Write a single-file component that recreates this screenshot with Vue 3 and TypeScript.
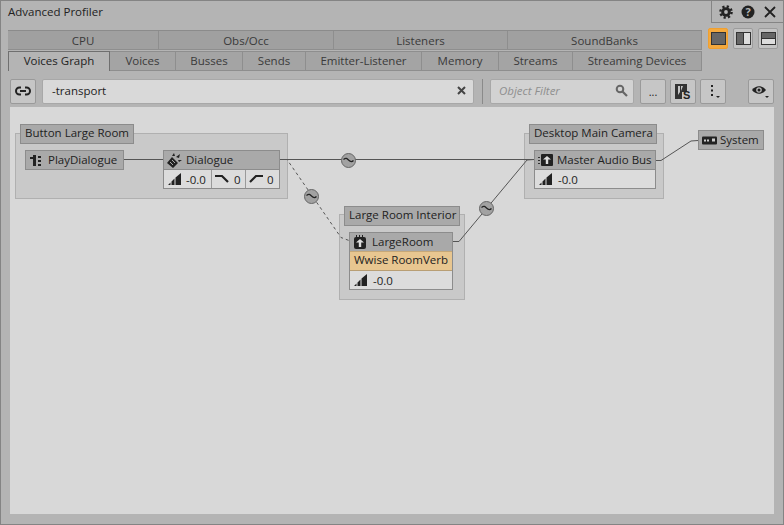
<script setup lang="ts">
const row1 = ['CPU', 'Obs/Occ', 'Listeners', 'SoundBanks']
const row2 = ['Voices Graph', 'Voices', 'Busses', 'Sends', 'Emitter-Listener', 'Memory', 'Streams', 'Streaming Devices']
const bubbles = [
  { x: 331, y: 46 },
  { x: 294, y: 82 },
  { x: 469, y: 94 }
]
</script>

<template>
  <div class="win">
    <header class="title">
      <span class="title-text">Advanced Profiler</span>
      <div class="win-actions">
        <svg width="14" height="14" viewBox="0 0 14 14"><circle cx="7" cy="7" r="4.800" fill="#222"/><circle cx="7" cy="7" r="5.600" fill="none" stroke="#222" stroke-width="2.400" stroke-dasharray="2.200 2.200"/><circle cx="7" cy="7" r="1.900" fill="#b4b4b4"/></svg>
        <svg width="14" height="14" viewBox="0 0 14 14"><circle class="ink" cx="7" cy="7" r="6.500"/><text x="7" y="11" text-anchor="middle" class="q">?</text></svg>
        <svg width="14" height="14" viewBox="0 0 14 14"><path d="M2 2l10 10M12 2L2 12" stroke="#222" stroke-width="1.800" fill="none"/></svg>
      </div>
    </header>

    <div class="tabs-area">
      <div class="tabs">
        <div class="row r1">
          <div v-for="t in row1" :key="t" class="tab">{{ t }}</div>
        </div>
        <div class="row r2">
          <div v-for="(t, i) in row2" :key="t" class="tab" :class="{ active: i === 0 }">{{ t }}</div>
        </div>
      </div>
      <div class="layouts">
        <button class="lay on"><span class="pane full"></span></button>
        <button class="lay"><span class="pane vert"><i></i><b></b></span></button>
        <button class="lay"><span class="pane horiz"><i></i><b></b></span></button>
      </div>
    </div>

    <div class="toolbar">
      <button class="tool">
        <svg width="16" height="10" viewBox="0 0 16 10"><path d="M6 1.500H4.500a3.500 3.500 0 0 0 0 7H6M10 1.500h1.500a3.500 3.500 0 0 1 0 7H10M5 5h6" fill="none" stroke="#222" stroke-width="2"/></svg>
      </button>
      <div class="search">
        <span>-transport</span>
        <svg width="9" height="9" viewBox="0 0 9 9"><path d="M1 1l7 7M8 1L1 8" stroke="#444" stroke-width="2" fill="none"/></svg>
      </div>
      <div class="sep"></div>
      <div class="filter">
        <span>Object Filter</span>
        <svg width="13" height="13" viewBox="0 0 13 13"><circle cx="5" cy="5" r="3.300" fill="none" stroke="#666" stroke-width="2"/><path d="M7.500 7.500L12 12" stroke="#666" stroke-width="2.200"/></svg>
      </div>
      <button class="tool dots">...</button>
      <button class="tool">
        <svg width="18" height="17" viewBox="0 0 18 17"><path d="M1 1h12v8H8v7H1z" fill="#333"/><path d="M4 3v9l2-3V3zM7 3v5l2-5z" fill="#c6c6c6"/><text x="9" y="16" class="vs">S</text></svg>
      </button>
      <button class="tool">
        <svg width="14" height="16" viewBox="0 0 14 16"><path d="M5 2h2v2H5zM5 6.500h2v2H5zM5 11h2v2H5z" fill="#222"/><path d="M10 13h4l-2 2z" fill="#222"/></svg>
      </button>
      <button class="tool eye">
        <svg width="18" height="14" viewBox="0 0 18 14"><path d="M0 6c4-5 10-5 14 0-4 5-10 5-14 0z" fill="#222"/><circle cx="7" cy="6" r="2.800" fill="#bbb"/><circle cx="7" cy="6" r="1.500" fill="#222"/><path d="M13 12h4l-2 2z" fill="#222"/></svg>
      </button>
    </div>

    <main class="canvas">
      <div class="group g1"></div>
      <div class="group g2"></div>
      <div class="group g3"></div>
      <div class="ghead gh1">Button Large Room</div>
      <div class="ghead gh2">Large Room Interior</div>
      <div class="ghead gh3">Desktop Main Camera</div>

      <svg class="wires" width="764" height="407" viewBox="10 107 764 407">
        <path d="M123 159.500H163" class="w"/>
        <path d="M279 159.500H534" class="w"/>
        <path d="M279 159.500h8L341 237.500l8 3" class="w dash"/>
        <path d="M452 241.500h7L527 160l7-.5" class="w"/>
        <path d="M655 160.500h6L691 141l7-.5" class="w"/>
      </svg>
      <div v-for="b in bubbles" :key="b.x" class="bubble" :style="{ left: b.x + 'px', top: b.y + 'px' }">
        <svg width="11" height="7" viewBox="0 0 11 7"><path d="M.5 2.500c2.500-2 3.500-1 5 .5s3 2.500 5 .5" stroke="#222" stroke-width="1.200" fill="none"/></svg>
      </div>

      <section class="node n-play">
        <div class="nhead">
          <svg width="13" height="13" viewBox="0 0 13 13"><path d="M1 3h3V1h3v11H4V5H1zM9 2h3v2H9zM9 6h3v2H9zM9 10h3v2H9z" fill="#222"/></svg>
          <span>PlayDialogue</span>
        </div>
      </section>

      <section class="node n-dial">
        <div class="nhead">
          <svg width="15" height="15" viewBox="0 0 15 15"><path d="M0 10l5-6 6 6-5 5zM5 3l2-3 1 3zM9 4l4-3-1 4zM11 7h4l-3 2z" fill="#222"/><path d="M3 9l3 3M5 7l3 3" stroke="#aaa"/></svg>
          <span>Dialogue</span>
        </div>
        <div class="cells c3">
          <div class="cell"><svg class="bar" width="13" height="12" viewBox="0 0 13 12"><path d="M0 12l2.500-2.500V12zM3.500 12V8.500L6.500 5.500V12zM7.500 12V4.500L13 0v12z" fill="#222"/></svg><span>-0.0</span></div>
          <div class="cell"><svg width="15" height="10" viewBox="0 0 15 10"><path d="M0 2h7l6 6" fill="none" stroke="#222" stroke-width="2.200"/></svg><span class="num">0</span></div>
          <div class="cell"><svg width="15" height="10" viewBox="0 0 15 10"><path d="M1 8l6-6h7" fill="none" stroke="#222" stroke-width="2.200"/></svg><span class="num">0</span></div>
        </div>
      </section>

      <section class="node n-room">
        <div class="nhead">
          <svg width="14" height="15" viewBox="0 0 14 15"><rect x="1" y="2" width="12" height="12" rx="2" fill="#222"/><path d="M3 0h1v2H3zM6 0h1v2H6zM9 0h1v2H9z" fill="#222"/><path d="M7 4l4 3.500H8.200V12H5.800V7.500H3z" fill="#ddd"/></svg>
          <span>LargeRoom</span>
        </div>
        <div class="fx">Wwise RoomVerb</div>
        <div class="cells"><div class="cell"><svg class="bar" width="13" height="12" viewBox="0 0 13 12"><path d="M0 12l2.500-2.500V12zM3.500 12V8.500L6.500 5.500V12zM7.500 12V4.500L13 0v12z" fill="#222"/></svg><span>-0.0</span></div></div>
      </section>

      <section class="node n-master">
        <div class="nhead">
          <svg width="15" height="14" viewBox="0 0 15 14"><rect x="3" y="1" width="12" height="12" rx="1" fill="#222"/><path d="M0 4h2v1H0zM0 7h2v1H0zM0 10h2v1H0z" fill="#333"/><path d="M9 3l4 3.500h-2.800V11H7.800V6.500H5z" fill="#ddd"/></svg>
          <span>Master Audio Bus</span>
        </div>
        <div class="cells"><div class="cell"><svg class="bar" width="13" height="12" viewBox="0 0 13 12"><path d="M0 12l2.500-2.500V12zM3.500 12V8.500L6.500 5.500V12zM7.500 12V4.500L13 0v12z" fill="#222"/></svg><span>-0.0</span></div></div>
      </section>

      <section class="node n-sys">
        <div class="nhead">
          <svg width="15" height="9" viewBox="0 0 15 9"><rect width="15" height="8" y=".5" rx="1" fill="#222"/><path d="M2 3.500h2v2H2zM5 3.500h2v2H5zM10 2.500h3v3h-3z" fill="#ccc"/></svg>
          <span>System</span>
        </div>
      </section>
    </main>
  </div>
</template>

<style>
html, body { margin: 0; background: #b4b4b4; }
</style>

<style scoped>
.win {
  position: relative;
  box-sizing: border-box;
  width: 784px;
  height: 525px;
  display: flex;
  flex-direction: column;
  background: #b4b4b4;
  border: 1px solid #848484;
  font-family: "Open Sans", "Noto Sans", sans-serif;
  font-size: 11.5px;
  color: #222;
  overflow: hidden;
}
.title {
  height: 29px;
  flex: none;
  display: flex;
  justify-content: space-between;
  align-items: flex-start;
}
.title-text { padding: 3px 0 0 7px; color: #222; }
.win-actions {
  width: 73px;
  height: 23px;
  margin-top: -1px;
  margin-right: -1px;
  padding-right: 7px;
  box-sizing: border-box;
  border-left: 1px solid #848484;
  border-bottom: 1px solid #848484;
  border-top: 1px solid #b4b4b4;
  display: flex;
  align-items: center;
  justify-content: flex-end;
  gap: 8px;
  background: #b4b4b4;
}
.ink { fill: #222; }
.q { font: bold 11px "Open Sans", sans-serif; fill: #b4b4b4; }
.vs { font: bold 11px "Liberation Sans", sans-serif; fill: #222; }
.tabs-area { display: flex; flex: none; }
.tabs { margin-left: 7px; width: 694px; }
.row { display: flex; height: 20px; box-sizing: border-box; }
.r1 { border-top: 1px solid #8b8b8b; }
.r1 .tab { height: 19px; background: #a0a0a0; color: #3a3a3a; }
.r1 .tab:nth-child(1) { width: 151px; }
.r1 .tab:nth-child(2) { width: 175px; }
.r1 .tab:nth-child(3) { width: 174px; }
.r1 .tab:nth-child(4) { width: 194px; }
.r2 { margin-top: 1px; height: 20px; }
.r2 .tab { padding-bottom: 2px; }
.tab {
  box-sizing: border-box;
  height: 20px;
  display: flex;
  align-items: center;
  justify-content: center;
  background: #a4a4a4;
  color: #3a3a3a;
  border-right: 1px solid #8e8e8e;
  border-bottom: 1px solid #8e8e8e;
  border-top: 1px solid #8e8e8e;
  white-space: nowrap;
}
.r1 .tab { border-top: 0; }
.r2 .tab:nth-child(1) { width: 102px; }
.r2 .tab:nth-child(2) { width: 66px; }
.r2 .tab:nth-child(3) { width: 67px; }
.r2 .tab:nth-child(4) { width: 63px; }
.r2 .tab:nth-child(5) { width: 116px; }
.r2 .tab:nth-child(6) { width: 77px; }
.r2 .tab:nth-child(7) { width: 74px; }
.r2 .tab:nth-child(8) { width: 129px; }
.tab.active {
  background: #b4b4b4;
  color: #222;
  border: 1px solid #6f6f6f;
  border-bottom: 0;
}
.layouts { display: flex; gap: 5px; margin-left: 6px; margin-top: -2px; height: 21px; }
.lay {
  box-sizing: border-box;
  width: 20px;
  height: 21px;
  padding: 0;
  border: 1px solid #9c9c9c;
  border-radius: 2px;
  background: #c4c4c4;
  display: flex;
  align-items: center;
  justify-content: center;
}
.lay.on { background: #f4a93d; border-color: #f0a030; }
.pane {
  box-sizing: border-box;
  width: 15px;
  height: 13px;
  border: 1px solid #333;
  display: flex;
}
.pane.full { background: #666; }
.pane i { background: #666; flex: 1; }
.pane b { background: #ddd; flex: 1; }
.pane.vert i { border-right: 1px solid #333; }
.pane.horiz { flex-direction: column; }
.pane.horiz i { border-bottom: 1px solid #333; }
.toolbar {
  display: flex;
  align-items: center;
  height: 26px;
  margin-top: 7px;
  padding-left: 9px;
  flex: none;
}
.tool {
  box-sizing: border-box;
  width: 26px;
  height: 25px;
  padding: 0;
  flex: none;
  border: 1px solid #9a9a9a;
  border-radius: 2px;
  background: #c6c6c6;
  display: flex;
  align-items: center;
  justify-content: center;
  font-family: inherit;
  color: #222;
}
.search {
  box-sizing: border-box;
  width: 432px;
  height: 25px;
  margin-left: 6px;
  padding: 0 7px 1px 9px;
  background: #d9d9d9;
  border: 1px solid #a8a8a8;
  border-radius: 2px;
  display: flex;
  align-items: center;
  justify-content: space-between;
}
.sep { width: 1px; height: 25px; background: #8a8a8a; margin: 0 7px 0 8px; flex: none; }
.filter {
  box-sizing: border-box;
  width: 144px;
  height: 25px;
  padding: 0 5px 1px 8px;
  background: #d2d2d2;
  border: 1px solid #a8a8a8;
  border-radius: 2px;
  display: flex;
  align-items: center;
  justify-content: space-between;
  font-style: italic;
  color: #8f8f8f;
}
.filter + .tool { margin-left: 6px; }
.tool + .tool { margin-left: 4px; }
.dots { font-size: 11px; }
.tool.eye { margin-left: 22px; }
.canvas {
  position: relative;
  flex: none;
  width: 764px;
  height: 407px;
  margin: 3px 0 0 9px;
  background: #d8d8d8;
}
.group, .ghead, .node, .wires, .bubble { position: absolute; box-sizing: border-box; }
.wires { left: 0; top: 0; }
.w { fill: none; stroke: #555; stroke-width: 1; }
.dash { stroke-dasharray: 3 3; }
.group { background: #c9c9c9; border: 1px solid #b0b0b0; }
.g1 { left: 5px; top: 26px; width: 273px; height: 66px; }
.g2 { left: 329px; top: 107px; width: 126px; height: 86px; }
.g3 { left: 514px; top: 26px; width: 140px; height: 66px; }
.ghead {
  height: 20px;
  line-height: 15px;
  background: #a9a9a9;
  border: 1px solid #8c8c8c;
  padding-left: 4px;
  white-space: nowrap;
}
.gh1 { left: 10px; top: 17px; width: 114px; }
.gh2 { left: 334px; top: 99px; width: 116px; }
.gh3 { left: 519px; top: 17px; width: 128px; }
.bubble {
  width: 15px;
  height: 15px;
  border-radius: 50%;
  background: #a2a2a2;
  border: 1px solid #666;
  display: flex;
  align-items: center;
  justify-content: center;
}
.node {
  background: #dcdcdc;
  border: 1px solid #8c8c8c;
}
.nhead {
  box-sizing: border-box;
  height: 18px;
  background: #a9a9a9;
  display: flex;
  align-items: center;
  padding-left: 3px;
  gap: 6px;
  white-space: nowrap;
}
.nhead span { position: relative; top: -1px; }
.nhead svg { flex: none; }
.n-play { left: 15px; top: 43px; width: 99px; height: 20px; }
.n-dial { left: 153px; top: 43px; width: 117px; height: 39px; }
.n-dial .nhead { gap: 4px; }
.n-room { left: 339px; top: 125px; width: 104px; height: 58px; }
.n-room .nhead { gap: 5px; }
.n-master { left: 524px; top: 43px; width: 122px; height: 39px; }
.n-master .nhead { gap: 4px; }
.n-sys { left: 688px; top: 23px; width: 66px; height: 20px; }
.n-sys .nhead { gap: 3px; }
.cells { display: flex; border-top: 1px solid #8c8c8c; box-sizing: border-box; height: 19px; }
.cell {
  display: flex;
  align-items: center;
  gap: 6px;
  padding-left: 4px;
  flex: 1;
}
.c3 .cell { gap: 5px; padding-left: 4px; flex: none; white-space: nowrap; }
.c3 .cell:nth-child(1) { width: 48px; border-right: 1px solid #9a9a9a; box-sizing: border-box; }
.c3 .cell:nth-child(2) { width: 34px; border-right: 1px solid #9a9a9a; box-sizing: border-box; padding-left: 3px; gap: 4px; }
.c3 .cell:nth-child(3) { width: 33px; box-sizing: border-box; padding-left: 3px; gap: 3px; }
.fx {
  box-sizing: border-box;
  height: 19px;
  line-height: 15px;
  background: #e8c690;
  padding-left: 4px;
  border-top: 1px solid #c6a878;
  white-space: nowrap;
}
.n-room .cells { border-top-color: #b89e74; }
</style>
